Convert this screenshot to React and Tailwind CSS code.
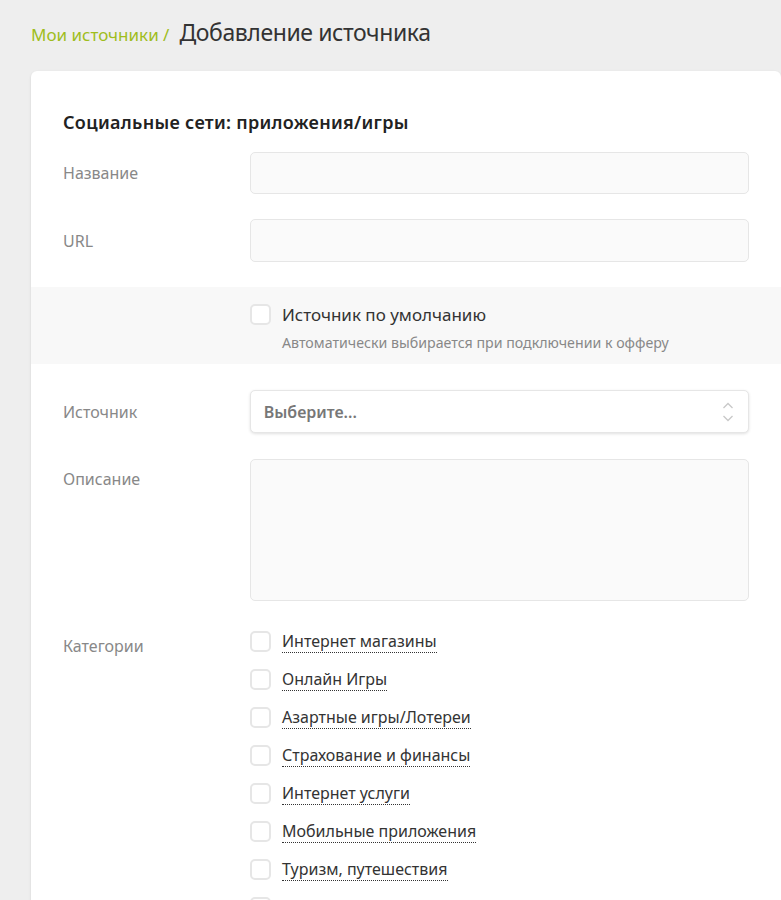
import { useState } from 'react';

const categories = [
  'Интернет магазины',
  'Онлайн Игры',
  'Азартные игры/Лотереи',
  'Страхование и финансы',
  'Интернет услуги',
  'Мобильные приложения',
  'Туризм, путешествия',
  'Образование',
];

function Checkbox({ checked, onChange }) {
  return (
    <button
      type="button"
      onClick={onChange}
      className={`w-[21px] h-[21px] shrink-0 rounded-[5px] border-2 ${checked ? 'border-[#9bbf1a] bg-[#9bbf1a]' : 'border-[#e6e6e6] bg-white'}`}
    />
  );
}

export default function App() {
  const [isDefault, setIsDefault] = useState(false);
  const [selected, setSelected] = useState([]);

  const toggle = (name) => {
    setSelected((prev) => (prev.includes(name) ? prev.filter((n) => n !== name) : [...prev, name]));
  };

  return (
    <div className="min-h-[900px] bg-[#eeeeee] pl-[31px] font-['Noto_Sans',sans-serif]">
      <div className="flex items-baseline h-[71px] pt-[15px]">
        <a href="#" className="text-[17px] text-[#9fbd1c]">Мои источники /</a>
        <h1 className="ml-[10px] text-[23px] text-[#333] tracking-[-0.4px]">Добавление источника</h1>
      </div>

      <div className="bg-white rounded-tl-[6px] rounded-tr-[6px] pt-[39px] pb-4 shadow-sm">
        <h2 className="px-8 text-[18px] font-semibold text-[#222] leading-6 tracking-[0.3px]">Социальные сети: приложения/игры</h2>

        <div className="mt-[18px] flex items-center px-8">
          <label className="w-[187px] text-[16px] text-[#888]">Название</label>
          <input className="w-[500px] h-[42px] rounded-[5px] border border-[#e6e6e6] bg-[#fafafa] px-3 outline-none" />
        </div>

        <div className="mt-[25px] flex items-center px-8">
          <label className="w-[187px] text-[16px] text-[#888]">URL</label>
          <input className="w-[500px] h-[43px] rounded-[5px] border border-[#e6e6e6] bg-[#fafafa] px-3 outline-none" />
        </div>

        <div className="mt-[25px] bg-[#f8f8f8] pl-[219px] pt-[15px] h-[77px]">
          <div className="flex items-center gap-[11px]">
            <Checkbox checked={isDefault} onChange={() => setIsDefault(!isDefault)} />
            <span className="text-[17px] text-[#333]">Источник по умолчанию</span>
          </div>
          <p className="ml-[32px] mt-[4px] text-[14.2px] text-[#888]">Автоматически выбирается при подключении к офферу</p>
        </div>

        <div className="mt-[26px] flex items-center px-8">
          <label className="w-[187px] text-[16px] text-[#888]">Источник</label>
          <div className="w-[500px] h-[43px] rounded-[5px] border border-[#e6e6e6] bg-white shadow-[0_1px_3px_rgba(0,0,0,0.12)] flex items-center justify-between pl-[13px] pr-[14px]">
            <span className="text-[16px] font-semibold text-[#777]">Выберите...</span>
            <svg width="12" height="24" viewBox="0 0 12 24" fill="none" stroke="#c8c8c8" strokeWidth="1.3">
              <path d="M1.5 8 L6 3.5 L10.5 8" />
              <path d="M1.5 16 L6 20.5 L10.5 16" />
            </svg>
          </div>
        </div>

        <div className="mt-[26px] flex items-start px-8">
          <label className="w-[187px] pt-[8px] text-[16px] text-[#888]">Описание</label>
          <textarea className="w-[500px] h-[142px] rounded-[5px] border border-[#e6e6e6] bg-[#fafafa] px-3 py-2 outline-none resize-none" />
        </div>

        <div className="mt-[29px] flex items-start px-8">
          <label className="w-[187px] pt-[4px] text-[16px] text-[#888]">Категории</label>
          <ul className="flex flex-col gap-[15px]">
            {categories.map((c) => (
              <li key={c} className="flex items-center gap-[11px] h-[23px]">
                <Checkbox checked={selected.includes(c)} onChange={() => toggle(c)} />
                <span className="text-[16px] text-[#333] border-b border-dotted border-[#333] leading-[21px]">{c}</span>
              </li>
            ))}
          </ul>
        </div>
      </div>
    </div>
  );
}
